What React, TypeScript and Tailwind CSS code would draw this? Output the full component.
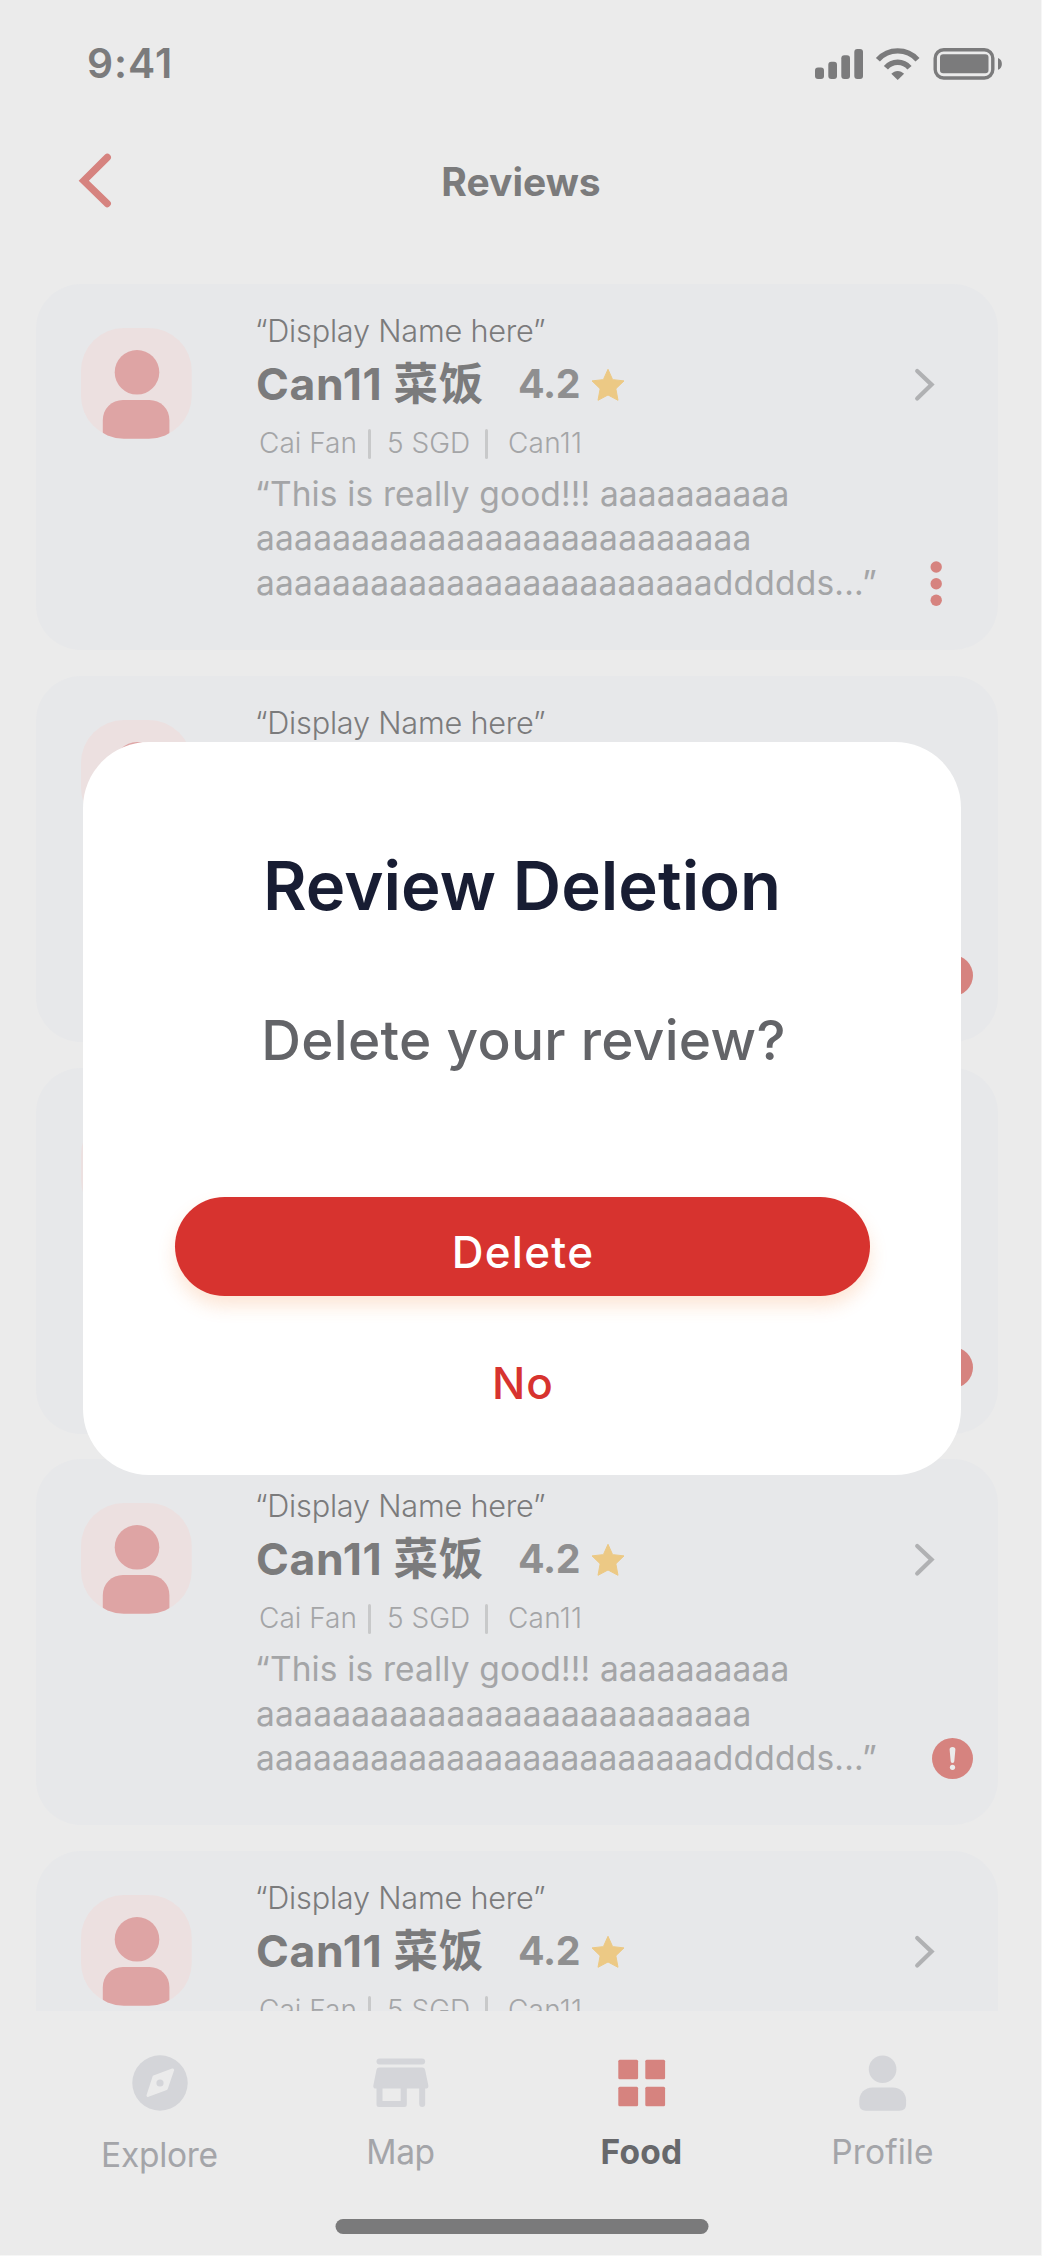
import React from "react";

type Marker = "menu" | "alert";

const reviews: { id: number; marker: Marker }[] = [
  { id: 1, marker: "menu" },
  { id: 2, marker: "alert" },
  { id: 3, marker: "alert" },
  { id: 4, marker: "alert" },
  { id: 5, marker: "alert" },
];

function StatusIcons() {
  return (
    <svg width="188" height="34" viewBox="815 47 188 34" fill="#7b7b7c">
      <rect x="815" y="67.5" width="9" height="11.5" rx="3" />
      <rect x="828.3" y="61.7" width="8.7" height="17.3" rx="3" />
      <rect x="841.3" y="55.3" width="8.7" height="23.7" rx="3" />
      <rect x="854.3" y="49" width="8.7" height="30" rx="3" />
      <g fill="none" stroke="#7b7b7c" strokeWidth="5.4">
        <path d="M877.9 59.7A26.6 26.6 0 0 1 917.5 59.7" />
        <path d="M885.9 67.8A15.3 15.3 0 0 1 909.5 67.8" />
      </g>
      <path d="M891.3 73.8C894.8 69.9 900.6 69.9 904.1 73.8L897.7 80Z" />
      <rect x="935.2" y="49.8" width="57.6" height="28.2" rx="8.5" fill="none" stroke="#7b7b7c" strokeWidth="3.4" />
      <rect x="940" y="54.3" width="48.5" height="18.9" rx="3.2" />
      <path d="M998 58C1003.2 59.8 1003.2 68 998 69.8Z" />
    </svg>
  );
}

function Avatar() {
  return (
    <svg width="111" height="111" viewBox="0 0 111 111" className="shrink-0">
      <defs>
        <clipPath id="avatar-clip">
          <rect width="110.7" height="110.7" rx="43" />
        </clipPath>
      </defs>
      <g clipPath="url(#avatar-clip)">
        <rect width="111" height="111" fill="#ece0e0" />
        <circle cx="56" cy="44.3" r="22.3" fill="#dea4a4" />
        <rect x="21.8" y="72" width="66.6" height="60" rx="20" fill="#dea4a4" />
      </g>
    </svg>
  );
}

function AlertMark() {
  return (
    <svg width="41" height="41" viewBox="0 0 41 41" className="self-end">
      <circle cx="20.5" cy="20.5" r="20.5" fill="#d6837f" />
      <path d="M17.6 11.6A2.9 2.7 0 0 1 23.4 11.6L22.3 23.3A1.8 1.6 0 0 1 18.7 23.3Z" fill="#ebebeb" />
      <circle cx="20.5" cy="29.3" r="2.6" fill="#ebebeb" />
    </svg>
  );
}

function MenuDots() {
  return (
    <svg width="12" height="45" viewBox="0 0 12 45" fill="#d6837f" className="-mb-0.5 ml-[17px] block">
      <circle cx="6.2" cy="6" r="5.7" />
      <circle cx="6.2" cy="22.7" r="5.7" />
      <circle cx="6.2" cy="39.3" r="5.7" />
    </svg>
  );
}

function ReviewCard({ marker }: { marker: Marker }) {
  return (
    <article className="flex h-[366px] shrink-0 rounded-[45px] bg-[#e7e8ea] pr-[25px] pl-[45px]">
      <div className="w-[174px] shrink-0 pt-11">
        <Avatar />
      </div>
      <div className="w-[658px] shrink-0 whitespace-nowrap pt-7">
        <p className="text-[30.7px] leading-[37px] font-light tracking-[-0.23px] text-[#7b7b7c]">“Display Name here”</p>
        <div className="mt-[3px] flex h-16 items-center pl-px">
          <h2 className="w-[262px] text-[44.5px] leading-[64px] font-bold tracking-[0.65px] text-[#7b7b7c]">Can11 菜饭</h2>
          <span className="text-[39.4px] leading-[64px] font-bold tracking-[-0.3px] text-[#8f8f90]">4.2</span>
          <svg width="34" height="33" viewBox="0 0 34 33" className="ml-[11px]">
            <path
              d="M17 1.3L21.3 10.9Q21.6 11.6 22.4 11.7L33 12.9L25.4 20.2Q24.9 20.8 25 21.5L27 32.3L17.8 27.4Q17 27 16.2 27.4L7 32.3L9 21.5Q9.1 20.8 8.6 20.2L1 12.9L11.6 11.7Q12.4 11.6 12.7 10.9Z"
              fill="#ecc985"
              stroke="#ecc985"
              strokeWidth="1"
              strokeLinejoin="round"
            />
          </svg>
        </div>
        <div className="mt-[7px] flex h-[41px] items-center pl-1 text-[28px] leading-[41px] font-light text-[#a4a5a7]">
          <span className="w-[109px]">Cai Fan</span>
          <i className="h-[30px] w-[3px] rounded-full bg-[#c8c9ca]" />
          <span className="ml-[16px] w-[98px]">5 SGD</span>
          <i className="h-[30px] w-[3px] rounded-full bg-[#c8c9ca]" />
          <span className="ml-[20px] tracking-[0.2px]">Can11</span>
        </div>
        <div className="mt-2 text-[33.5px] leading-[44.4px] tracking-[0.25px] text-[#a4a5a7]">
          <p className="tracking-[0.14px]">“This is really good!!! aaaaaaaaaa</p>
          <p className="pl-px">aaaaaaaaaaaaaaaaaaaaaaaaaa</p>
          <p className="pl-px tracking-[0.22px]">aaaaaaaaaaaaaaaaaaaaaaaaddddds...”</p>
        </div>
      </div>
      <div className="flex w-[60px] shrink-0 flex-col justify-between pt-[83px] pb-[46px]">
        <svg width="24" height="35" viewBox="0 0 24 35" fill="none" stroke="#b0b1b3" strokeWidth="4.2" strokeLinecap="round">
          <path d="M4.2 4L18.6 17.6L4.2 31.6" />
        </svg>
        {marker === "menu" ? <MenuDots /> : <AlertMark />}
      </div>
    </article>
  );
}

function ExploreIcon() {
  return (
    <svg width="56" height="56" viewBox="0 0 56 56">
      <circle cx="28" cy="28" r="27.7" fill="#d4d5d9" />
      <path
        d="M40.6 15L34.3 33.6L16 40.4L22 22Z"
        fill="#ebebeb"
        stroke="#ebebeb"
        strokeWidth="3"
        strokeLinejoin="round"
      />
      <circle cx="28" cy="28" r="3.6" fill="#d4d5d9" />
    </svg>
  );
}

function StoreIcon() {
  return (
    <svg width="56" height="56" viewBox="0 0 56 56" fill="#d4d5d9">
      <rect x="3.5" y="3.5" width="48.6" height="6" rx="3" />
      <path d="M6.2 12.6H49.4Q51.6 12.6 52.1 14.8L55.3 30.3Q55.8 33.6 52.6 33.6H52.2V49Q52.2 52 49.2 52T46.2 49V33.6H33.8V49.5Q33.8 52 31.3 52H6Q3.5 52 3.5 49.5V33.6H3Q-.2 33.6.4 30.3L3.5 14.8Q4 12.6 6.2 12.6ZM9.5 33.6V46H27.7V33.6Z" />
    </svg>
  );
}

function GridIcon() {
  return (
    <svg width="56" height="56" viewBox="0 0 56 56" fill="#d6837f">
      <rect x="4.3" y="4.8" width="19.8" height="19.5" rx="1.5" />
      <rect x="31.3" y="4.8" width="19.8" height="19.5" rx="1.5" />
      <rect x="4.3" y="31.7" width="19.8" height="19.5" rx="1.5" />
      <rect x="31.3" y="31.7" width="19.8" height="19.5" rx="1.5" />
    </svg>
  );
}

function PersonIcon() {
  return (
    <svg width="56" height="56" viewBox="0 0 56 56" fill="#d4d5d9">
      <circle cx="27.6" cy="14.2" r="13.8" />
      <path d="M17.8 32.4H37.6C45.7 32.4 51.1 38.3 51.1 45.3V49.3Q51.1 55.8 44.6 55.8H10.8Q4.3 55.8 4.3 49.3V45.3C4.3 38.3 9.7 32.4 17.8 32.4Z" />
    </svg>
  );
}

const tabs = [
  { label: "Explore", icon: <ExploreIcon />, style: "mt-6 tracking-[-0.28px] text-[#a4a5a9]" },
  { label: "Map", icon: <StoreIcon />, style: "mt-[21px] tracking-[-0.4px] text-[#a4a5a9]" },
  { label: "Food", icon: <GridIcon />, style: "mt-[21px] font-bold tracking-[0.3px] text-[#67686b]" },
  { label: "Profile", icon: <PersonIcon />, style: "mt-[21px] tracking-[0.1px] text-[#a4a5a9]" },
];

export default function App() {
  return (
    <div className="relative h-[2256px] w-[1042px] overflow-hidden border-r border-b border-[#f6f6f6] bg-[#ebebeb] font-[Inter,'Noto_Sans_CJK_SC',sans-serif]">
      <div className="flex h-full flex-col">
        <div className="flex h-32 shrink-0 items-center justify-between pr-[38px] pl-[87px]">
          <span className="pb-0.5 text-[40.8px] leading-[50px] font-semibold tracking-[1px] text-[#7b7b7c]">9:41</span>
          <StatusIcons />
        </div>
        <header className="grid h-[156px] shrink-0 grid-cols-[140px_1fr_140px] items-center pb-[50px]">
          <svg width="36" height="56" viewBox="97 153 36 56" className="ml-[77px]" fill="none" stroke="#d6837f" strokeWidth="7.2" strokeLinecap="round">
            <path d="M127.3 157.4L103.8 180.8L127.3 203.6" />
          </svg>
          <h1 className="pt-0.5 pl-px text-center text-[39px] leading-[48px] font-bold text-[#7b7b7c]">Reviews</h1>
        </header>
        <main className="flex min-h-0 flex-1 flex-col gap-[25.75px] overflow-hidden pr-[43px] pl-9">
          {reviews.map((review) => (
            <ReviewCard key={review.id} marker={review.marker} />
          ))}
        </main>
        <nav className="h-[244px] shrink-0 bg-[#ebebeb] pt-[44px]">
          <div className="flex h-[164px] px-[39px]">
            {tabs.map((tab) => (
              <div key={tab.label} className="flex w-[241px] shrink-0 flex-col items-center">
                {tab.icon}
                <span className={`text-[33.5px] leading-[41px] ${tab.style}`}>{tab.label}</span>
              </div>
            ))}
          </div>
          <div className="mx-auto h-[14.5px] w-[373px] translate-x-[1.5px] rounded-full bg-[#7a7a7b]" />
        </nav>
      </div>

      <section
        role="dialog"
        className="absolute top-[742px] left-[83px] flex h-[733px] w-[878px] flex-col items-center rounded-[66px] bg-white whitespace-nowrap"
      >
        <h2 className="mt-[104px] text-[67px] leading-[80px] font-semibold text-[#181d33]">Review Deletion</h2>
        <p className="mt-[81px] pl-[3px] text-[55px] leading-[66px] font-medium tracking-[0.28px] text-[#636468]">Delete your review?</p>
        <button className="mt-[124px] h-[99px] w-[695px] rounded-full bg-[#d7332f] pt-[11px] pl-0.5 text-[44px] leading-[88px] font-medium tracking-[1.3px] text-white shadow-[0_10px_18px_rgba(245,130,50,0.2)]">
          Delete
        </button>
        <button className="mt-[60px] pl-0.5 text-[44px] leading-[54px] font-medium tracking-[1px] text-[#d7332f]">No</button>
      </section>
    </div>
  );
}
